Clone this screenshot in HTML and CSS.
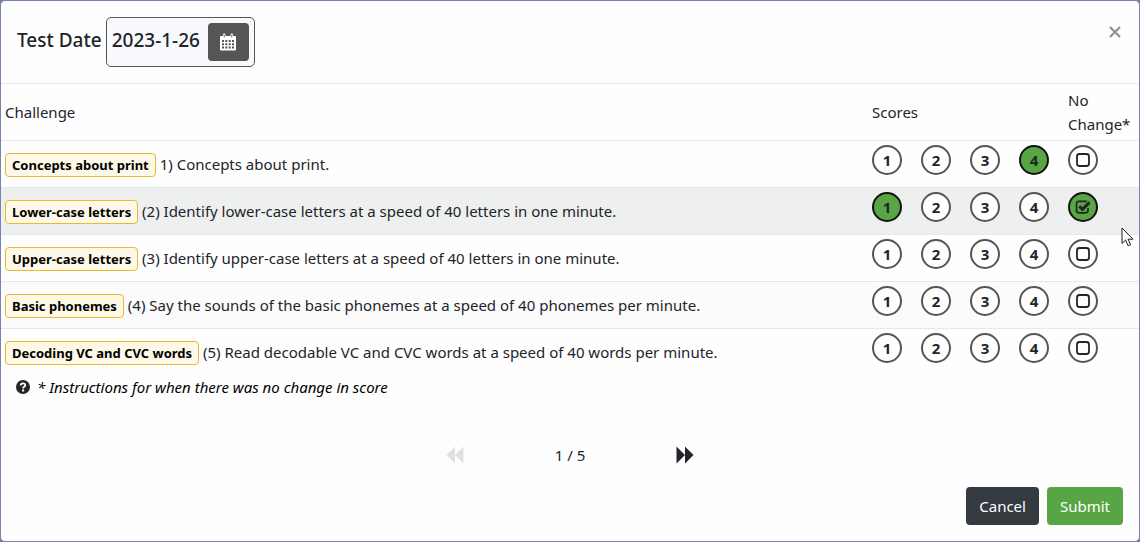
FILE: index.html
```html
<!DOCTYPE html>
<html lang="en">
<head>
<meta charset="utf-8">
<title>Test scores</title>
<link rel="stylesheet" href="styles.css">
</head>
<body>
<svg class="sprite" aria-hidden="true">
  <symbol id="box" viewBox="0 0 16 16"><rect x="2" y="2" width="12" height="12" rx="2.5" fill="none" stroke="currentColor" stroke-width="1.8"/></symbol>
  <symbol id="box-checked" viewBox="0 0 16 16"><path d="M13 9v2.600A2.200 2.200 0 0 1 10.800 13.800H3.700A2.200 2.200 0 0 1 1.500 11.600V4.500A2.200 2.200 0 0 1 3.700 2.300h7.100q.6 0 1 .2" fill="none" stroke="currentColor" stroke-width="1.700"/><path d="M4.300 7.200l3.200 3.200 7-7" fill="none" stroke="currentColor" stroke-width="3"/></symbol>
</svg>
<div class="dialog" role="dialog" aria-labelledby="title">
  <header class="dialog-header">
    <h1 class="title" id="title"><label for="date">Test Date</label></h1>
    <div class="date-box">
      <input class="date-input" id="date" type="text" value="2023-1-26">
      <button class="date-button" type="button" aria-label="Choose date">
        <svg width="16" height="18" viewBox="0 0 16 18"><path fill="#fff" d="M1 3h2V1.500Q3 .5 4.200.5T5.400 1.500V3h5.200V1.500Q10.600.5 11.800.5T13 1.500V3h2q1 0 1 1v12.500q0 1-1 1H1q-1 0-1-1V4q0-1 1-1z"/><path fill="#555" d="M2 7h2v2H2zM5.300 7h2v2h-2zM8.700 7h2v2h-2zM12 7h2v2h-2zM2 10.300h2v2H2zM5.300 10.300h2v2h-2zM8.700 10.300h2v2h-2zM12 10.300h2v2h-2zM2 13.600h2v2H2zM5.300 13.600h2v2h-2zM8.700 13.600h2v2h-2zM12 13.600h2v2h-2zM3.800 1.800h.8v2.700h-.8zM11.400 1.800h.8v2.700h-.8z"/></svg>
      </button>
    </div>
    <button class="close" type="button" aria-label="Close"><svg width="12" height="12" viewBox="0 0 12 12"><path d="M1 1l10 10M11 1l-10 10" stroke="#919191" stroke-width="2.200"/></svg></button>
  </header>

  <table class="scores">
    <colgroup><col><col class="col-score" span="4"><col class="col-none"></colgroup>
    <thead>
      <tr><th scope="col">Challenge</th><th class="scores-head" scope="colgroup" colspan="4">Scores</th><th class="scores-head" scope="col">No Change*</th></tr>
    </thead>
    <tbody>
      <tr>
        <td><span class="tag">Concepts about print</span> 1) Concepts about print.</td>
        <td class="pick"><label class="choice"><input type="radio" name="s1"><span>1</span></label></td>
        <td class="pick"><label class="choice"><input type="radio" name="s1"><span>2</span></label></td>
        <td class="pick"><label class="choice"><input type="radio" name="s1"><span>3</span></label></td>
        <td class="pick"><label class="choice"><input type="radio" name="s1" checked><span>4</span></label></td>
        <td class="pick"><label class="choice"><input type="checkbox" aria-label="No change"><svg><use href="#box"/></svg></label></td>
      </tr>
      <tr class="active">
        <td><span class="tag">Lower-case letters</span> (2) Identify lower-case letters at a speed of 40 letters in one minute.</td>
        <td class="pick"><label class="choice"><input type="radio" name="s2" checked><span>1</span></label></td>
        <td class="pick"><label class="choice"><input type="radio" name="s2"><span>2</span></label></td>
        <td class="pick"><label class="choice"><input type="radio" name="s2"><span>3</span></label></td>
        <td class="pick"><label class="choice"><input type="radio" name="s2"><span>4</span></label></td>
        <td class="pick"><label class="choice"><input type="checkbox" aria-label="No change" checked><svg><use href="#box-checked"/></svg></label></td>
      </tr>
      <tr>
        <td><span class="tag">Upper-case letters</span> (3) Identify upper-case letters at a speed of 40 letters in one minute.</td>
        <td class="pick"><label class="choice"><input type="radio" name="s3"><span>1</span></label></td>
        <td class="pick"><label class="choice"><input type="radio" name="s3"><span>2</span></label></td>
        <td class="pick"><label class="choice"><input type="radio" name="s3"><span>3</span></label></td>
        <td class="pick"><label class="choice"><input type="radio" name="s3"><span>4</span></label></td>
        <td class="pick"><label class="choice"><input type="checkbox" aria-label="No change"><svg><use href="#box"/></svg></label></td>
      </tr>
      <tr class="striped">
        <td><span class="tag">Basic phonemes</span> (4) Say the sounds of the basic phonemes at a speed of 40 phonemes per minute.</td>
        <td class="pick"><label class="choice"><input type="radio" name="s4"><span>1</span></label></td>
        <td class="pick"><label class="choice"><input type="radio" name="s4"><span>2</span></label></td>
        <td class="pick"><label class="choice"><input type="radio" name="s4"><span>3</span></label></td>
        <td class="pick"><label class="choice"><input type="radio" name="s4"><span>4</span></label></td>
        <td class="pick"><label class="choice"><input type="checkbox" aria-label="No change"><svg><use href="#box"/></svg></label></td>
      </tr>
      <tr>
        <td><span class="tag">Decoding VC and CVC words</span> (5) Read decodable VC and CVC words at a speed of 40 words per minute.</td>
        <td class="pick"><label class="choice"><input type="radio" name="s5"><span>1</span></label></td>
        <td class="pick"><label class="choice"><input type="radio" name="s5"><span>2</span></label></td>
        <td class="pick"><label class="choice"><input type="radio" name="s5"><span>3</span></label></td>
        <td class="pick"><label class="choice"><input type="radio" name="s5"><span>4</span></label></td>
        <td class="pick"><label class="choice"><input type="checkbox" aria-label="No change"><svg><use href="#box"/></svg></label></td>
      </tr>
    </tbody>
  </table>

  <p class="note">
    <svg width="14" height="14" viewBox="0 0 14 14"><circle cx="7" cy="7" r="7" fill="#212529"/><path d="M4.600 5.300Q4.900 3.300 7 3.300T9.300 5.100Q9.300 6.200 8 6.900 7.100 7.400 7.100 8.500" fill="none" stroke="#fff" stroke-width="1.800"/><rect x="6.100" y="9.500" width="2" height="2" fill="#fff"/></svg>
    <em>* Instructions for when there was no change in score</em>
  </p>

  <nav class="pager" aria-label="Pages">
    <button class="page-button" type="button" aria-label="Previous page" disabled><svg width="18" height="18" viewBox="0 0 18 18"><path fill="currentColor" d="M9 .5v17L.5 9zM17.500.5v17L9 9z"/></svg></button>
    <span class="page-count">1 / 5</span>
    <button class="page-button" type="button" aria-label="Next page"><svg width="18" height="18" viewBox="0 0 18 18"><path fill="currentColor" d="M.5.5v17L9 9zM9 .5v17L17.500 9z"/></svg></button>
  </nav>

  <footer class="dialog-footer">
    <button class="button" type="button">Cancel</button>
    <button class="button submit" type="button">Submit</button>
  </footer>
</div>
<svg class="cursor" width="13" height="20" viewBox="0 0 13 20" aria-hidden="true"><path d="M1 1v15.500l3.600-3.400 2.500 5.700 2.500-1.100-2.500-5.500H12z" fill="#fff" stroke="#1b1b2b" stroke-width="1"/></svg>
</body>
</html>
```
FILE: styles.css
```css
* { box-sizing: border-box; }

body {
  margin: 0;
  background: #7a7f8c;
  color: #212529;
  font: 15px/24px "Noto Sans", "Open Sans", sans-serif;
}

button, input { font: inherit; color: inherit; }

.sprite { display: none; }

.dialog {
  display: flex;
  flex-direction: column;
  min-height: 100vh;
  border: 1px solid #7783ac;
  border-radius: 5px;
  background: #fefefe;
}

.dialog-header {
  display: flex;
  align-items: flex-start;
  gap: 4px;
  padding: 16px;
  border-bottom: 1px solid #e6e8ea;
}

.title {
  margin: 0;
  padding-top: 8px;
  font-size: 19px;
  line-height: 30px;
  font-weight: 500;
}

.date-box {
  display: flex;
  align-items: flex-start;
  padding: 5px;
  height: 50px;
  border: 1px solid #555;
  border-radius: 5px;
  background: #f8f9fc;
}

.date-input {
  width: 96px;
  height: 34px;
  padding: 0;
  border: 0;
  background: none;
  font-size: 19px;
  font-weight: 500;
}

.date-button {
  display: flex;
  align-items: center;
  justify-content: center;
  width: 41px;
  height: 38px;
  padding: 0;
  border: 0;
  border-radius: 4px;
  background: #555;
}

.close {
  display: flex;
  margin-left: auto;
  padding: 9px 2px;
  border: 0;
  background: none;
}

.scores {
  width: 100%;
  border-spacing: 0;
  table-layout: fixed;
}

.col-score { width: 49px; }
.col-none { width: 76px; }

.scores th {
  padding: 4px;
  font-weight: 400;
  text-align: left;
}

.scores .scores-head { padding: 4px 5px; }

.scores td {
  padding: 4px;
  border-top: 1px solid #e6e8ea;
}

.scores .pick {
  height: 47px;
  padding: 4px 5px 12px;
}

.active { background: #eef0ef; }
.striped { background: #fbfbfb; }

.tag {
  display: inline-block;
  padding: 0 6px;
  border: 1px solid #ecb731;
  border-radius: 4px;
  background: #fef9e7;
  color: #000;
  font-size: 13px;
  line-height: 22px;
  font-weight: 700;
}

.choice {
  display: flex;
  align-items: center;
  justify-content: center;
  position: relative;
  width: 30px;
  height: 30px;
  border: 2px solid #555;
  border-radius: 50%;
  background: #fefefe;
  font-weight: 700;
}

.choice input {
  position: absolute;
  inset: 0;
  width: 100%;
  height: 100%;
  margin: 0;
  opacity: 0;
}

.choice svg { width: 16px; height: 16px; }

.choice:has(:checked) {
  border-color: #111;
  background: #58a545;
}

.note {
  display: flex;
  align-items: center;
  gap: 7px;
  margin: 0;
  padding-left: 15px;
  color: #000;
}

.pager {
  display: flex;
  align-items: center;
  justify-content: center;
  margin-top: 32px;
}

.page-button {
  display: flex;
  align-items: center;
  justify-content: center;
  width: 108px;
  height: 48px;
  padding: 0;
  border: 0;
  border-radius: 4px;
  background: #fefefe;
}

.page-button:disabled { background: #fdfdfd; color: #dfe0e2; }

.page-count {
  width: 122px;
  text-align: center;
}

.dialog-footer {
  display: flex;
  justify-content: flex-end;
  gap: 8px;
  margin-top: auto;
  padding: 8px 16px 16px;
}

.button {
  padding: 7px 13px;
  border: 0;
  border-radius: 4px;
  background: #343a40;
  color: #fff;
}

.submit { background: #58a545; }

.cursor {
  position: absolute;
  top: 227px;
  right: 6px;
}
```
